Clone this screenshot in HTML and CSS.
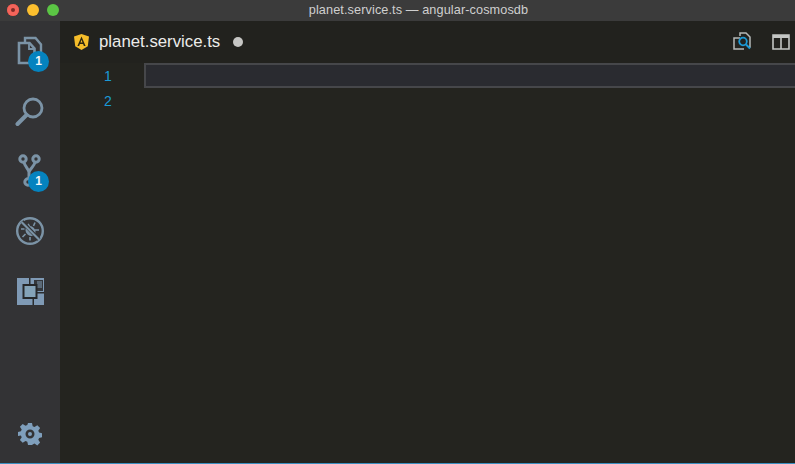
FILE: index.html
```html
<!DOCTYPE html>
<html lang="en">
<head>
<meta charset="utf-8">
<title>planet.service.ts — angular-cosmosdb</title>
<link rel="stylesheet" href="styles.css">
</head>
<body>
<div class="window">
  <header class="titlebar">
    <div class="lights"><span class="light red"></span><span class="light yellow"></span><span class="light green"></span></div>
    <div class="title">planet.service.ts — angular-cosmosdb</div>
  </header>
  <div class="main">
    <nav class="activity">
      <div class="act">
        <svg width="30" height="30" viewBox="0 0 30 30" fill="none" stroke="#7b93a6" stroke-width="2.400"><path d="M10 6V2h10.500l5.500 6.500V20"/><path d="M4 7h10.500l5 5.500V27H4z" stroke-width="2.600"/><path d="M14 7v6h6" stroke-width="1.800"/></svg>
        <span class="badge">1</span>
      </div>
      <div class="act">
        <svg width="30" height="32" viewBox="0 0 30 32" fill="none" stroke="#7b93a6"><circle cx="18" cy="13" r="9" stroke-width="2.800"/><path d="M11.500 20L2.500 29" stroke-width="4" stroke-linecap="round"/></svg>
      </div>
      <div class="act">
        <svg width="30" height="36" viewBox="0 0 30 36" fill="none" stroke="#7b93a6" stroke-width="3"><circle cx="8" cy="6" r="3.200"/><circle cx="21" cy="6" r="3.200"/><circle cx="13" cy="29" r="3.200"/><path d="M9 9.500c1 4 4 6 5 9.500M20 9.500c-1 4-5 6-6 9.500v7"/></svg>
        <span class="badge">1</span>
      </div>
      <div class="act">
        <svg width="30" height="30" viewBox="0 0 30 30" fill="none" stroke="#7b93a6"><circle cx="15" cy="15" r="12.800" stroke-width="2.400"/><ellipse cx="15.500" cy="15" rx="4.500" ry="5.500" fill="#7b93a6" stroke="none" transform="rotate(-45 15.500 15)"/><path d="M9.500 13H6M10.500 18l-3 3M15 21v3.500M13 8l1.500 2.500M20 6.500l-1.500 3.500M24 14h-4" stroke-width="1.600"/><path d="M7 5.500l17 18" stroke="#333335" stroke-width="4"/><path d="M6.500 6l18 18" stroke-width="2.200"/></svg>
      </div>
      <div class="act">
        <svg width="27" height="27" viewBox="0 0 27 27"><path d="M0 0h27v27H0z" fill="#7f9ab5"/><path d="M17 2h9v11h-9z" fill="#34373b"/><path d="M20 3h5v7h-5z" fill="#5b6a78"/><path d="M12 0h1.500v6H12zM15.500 21H17v6h-1.500zM20 14h7v1.500h-7z" fill="#2a2c2e"/><path d="M6.500 7h13v13h-13z" fill="#84a3b8" stroke="#26282a" stroke-width="2"/></svg>
      </div>
      <div class="act-spacer"></div>
      <div class="act-gear">
        <svg width="24" height="24" viewBox="0 0 24 24"><path fill="#7f9fbc" fill-rule="evenodd" d="M10 1h4l.7 3.200 1.800.8 2.800-1.800 2.800 2.800-1.800 2.800.8 1.800 3.200.7v4l-3.200.7-.8 1.800 1.800 2.800-2.800 2.800-2.800-1.800-1.800.8L14 23h-4l-.7-3.200-1.800-.8-2.800 1.800-2.800-2.800 1.800-2.800-.8-1.800L-.3 14v-4l3.200-.7.8-1.800L1.900 4.700l2.800-2.800 2.800 1.800 1.800-.8zM12 7.500a4.500 4.500 0 1 0 0 9 4.500 4.500 0 0 0 0-9zM12 10a2 2 0 1 1 0 4 2 2 0 0 1 0-4z"/></svg>
      </div>
    </nav>
    <section class="editor">
      <div class="tabs">
        <div class="tab">
          <svg class="ng" width="15" height="16" viewBox="0 0 15 16"><path d="M7.500 0L15 2.600l-1.200 9.700L7.500 16 1.200 12.300 0 2.600z" fill="#f5bd2a"/><path d="M7.500 2.500L3.400 12h1.700l.8-2.100h3.200l.8 2.100h1.700zM6.500 8.500l1-2.800 1 2.800z" fill="#2a2410"/></svg>
          <span class="tab-name">planet.service.ts</span>
          <span class="dirty"></span>
        </div>
        <div class="tab-actions">
          <svg width="20" height="20" viewBox="0 0 20 20" fill="none" stroke="#b5b9b8" stroke-width="1.500"><path d="M7 6H1v11h10M7 4V1h6l4 4v10h-2"/><circle cx="10" cy="9.500" r="3.800" stroke="#1c9ad6" stroke-width="1.800"/><path d="M13 12.500l4 4" stroke="#1c9ad6" stroke-width="2"/></svg>
          <svg width="18" height="16" viewBox="0 0 18 16" fill="none"><path d="M1 1h16v14H1zM9 1v14" stroke="#c4c6c4" stroke-width="1.600"/><path d="M1 1h16v3H1z" fill="#c4c6c4"/></svg>
        </div>
      </div>
      <div class="code">
        <div class="line"><span class="num">1</span><span class="current"></span></div>
        <div class="line"><span class="num">2</span></div>
      </div>
    </section>
  </div>
  <footer class="status"></footer>
</div>
</body>
</html>
```
FILE: styles.css
```css
* { box-sizing: border-box; }
html, body { margin: 0; padding: 0; background: #24241f; }
.window {
  width: 795px;
  height: 464px;
  display: flex;
  flex-direction: column;
  overflow: hidden;
  font-family: "Liberation Sans", Arial, sans-serif;
}
.titlebar {
  height: 21px;
  flex: none;
  background: #3b3b3b;
  position: relative;
  display: flex;
  align-items: center;
  justify-content: center;
  padding-left: 42px;
}
.lights {
  position: absolute;
  left: 7px;
  top: 4px;
  display: flex;
  gap: 8px;
}
.light { width: 12px; height: 12px; border-radius: 50%; display: block; }
.red { background: #f4645a; box-shadow: inset 0 0 0 4px #f4645a, inset 0 0 0 6px #7e2a26; }
.yellow { background: #fcbf2e; }
.green { background: #5bc544; }
.title { color: #cfcfcf; font-size: 12.700px; line-height: 21px; letter-spacing: 0.1px; }
.main { flex: 1; display: flex; min-height: 0; }
.activity {
  width: 60px;
  flex: none;
  background: #333335;
  display: flex;
  flex-direction: column;
}
.act {
  position: relative;
  height: 60px;
  flex: none;
  display: flex;
  align-items: center;
  justify-content: center;
}
.act-spacer { flex: 1; }
.act-gear { display: flex; justify-content: center; margin-bottom: 17px; }
.badge {
  position: absolute;
  left: 28px;
  top: 30px;
  width: 21px;
  height: 21px;
  border-radius: 50%;
  background: #0583bf;
  color: #f2f6f8;
  font-size: 12px;
  font-weight: 700;
  line-height: 21px;
  text-align: center;
}
.editor { flex: 1; display: flex; flex-direction: column; min-width: 0; background: #24241f; }
.tabs {
  height: 42px;
  flex: none;
  display: flex;
  align-items: center;
  justify-content: space-between;
  background: #22221e;
}
.tab { display: flex; align-items: center; padding-left: 14px; }
.ng { flex: none; }
.tab-name { color: #ececea; font-size: 16.800px; margin-left: 10px; }
.dirty {
  width: 10px;
  height: 10px;
  border-radius: 50%;
  background: #c6c6c4;
  margin-left: 13px;
}
.tab-actions { display: flex; align-items: center; gap: 19px; padding-right: 5px; }
.code { display: flex; flex-direction: column; }
.line { height: 25px; display: flex; align-items: center; }
.num {
  width: 84px;
  flex: none;
  padding-left: 44px;
  color: #1a9ad6;
  font-size: 14px;
}
.current {
  flex: 1;
  height: 25px;
  background: #2a2b30;
  border: 2px solid #46474a;
  border-right: 0;
}
.status { height: 1px; flex: none; background: #3a8fc0; }
```
